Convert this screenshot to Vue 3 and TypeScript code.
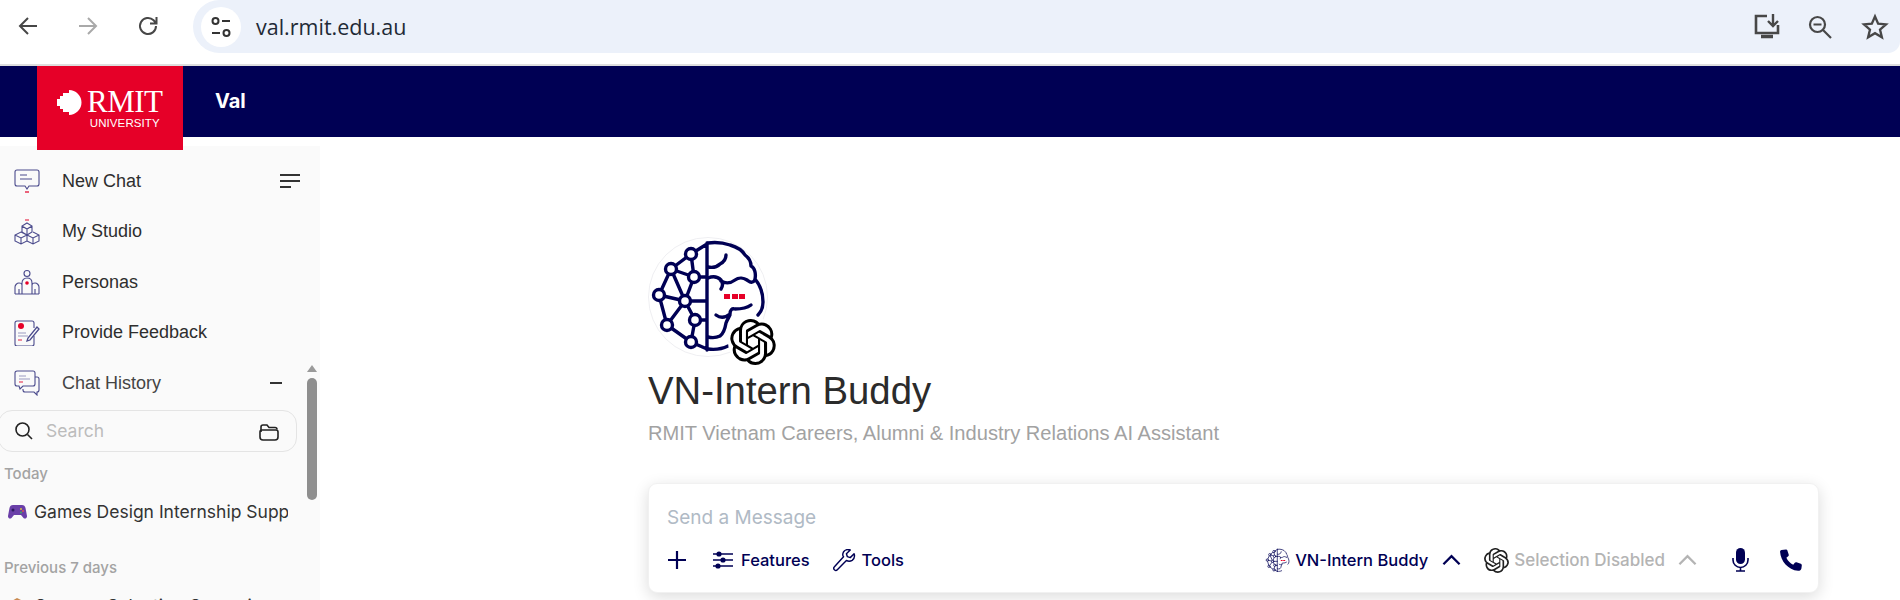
<script setup lang="ts">
interface NavItem { label: string; icon: string }
const navItems: NavItem[] = [
  { label: 'New Chat', icon: 'chat' },
  { label: 'My Studio', icon: 'studio' },
  { label: 'Personas', icon: 'personas' },
  { label: 'Provide Feedback', icon: 'feedback' },
  { label: 'Chat History', icon: 'history' },
]
</script>

<template>
  <div class="page">
    <svg class="defs" aria-hidden="true">
      <symbol id="openai" viewBox="0 0 24 24">
        <path fill="currentColor" d="M22.2819 9.8211a5.9847 5.9847 0 0 0-.5157-4.9108 6.0462 6.0462 0 0 0-6.5098-2.9A6.0651 6.0651 0 0 0 4.9807 4.1818a5.9847 5.9847 0 0 0-3.9977 2.9 6.0462 6.0462 0 0 0 .7427 7.0966 5.98 5.98 0 0 0 .511 4.9107 6.051 6.051 0 0 0 6.5146 2.9001A5.9847 5.9847 0 0 0 13.2599 24a6.0557 6.0557 0 0 0 5.7718-4.2058 5.9894 5.9894 0 0 0 3.9977-2.9001 6.0557 6.0557 0 0 0-.7475-7.0729zm-9.022 12.6081a4.4755 4.4755 0 0 1-2.8764-1.0408l.1419-.0804 4.7783-2.7582a.7948.7948 0 0 0 .3927-.6813v-6.7369l2.02 1.1686a.071.071 0 0 1 .038.052v5.5826a4.504 4.504 0 0 1-4.4945 4.4944zm-9.6607-4.1254a4.4708 4.4708 0 0 1-.5346-3.0137l.142.0852 4.783 2.7582a.7712.7712 0 0 0 .7806 0l5.8428-3.3685v2.3324a.0804.0804 0 0 1-.0332.0615L9.74 19.9502a4.4992 4.4992 0 0 1-6.1408-1.6464zM2.3408 7.8956a4.485 4.485 0 0 1 2.3655-1.9728V11.6a.7664.7664 0 0 0 .3879.6765l5.8144 3.3543-2.0201 1.1685a.0757.0757 0 0 1-.071 0l-4.8303-2.7865A4.504 4.504 0 0 1 2.3408 7.872zm16.5963 3.8558L13.1038 8.364 15.1192 7.2a.0757.0757 0 0 1 .071 0l4.8303 2.7913a4.4944 4.4944 0 0 1-.6765 8.1042v-5.6772a.79.79 0 0 0-.407-.667zm2.0107-3.0231l-.142-.0852-4.7735-2.7818a.7759.7759 0 0 0-.7854 0L9.409 9.2297V6.8974a.0662.0662 0 0 1 .0284-.0615l4.8303-2.7866a4.4992 4.4992 0 0 1 6.6802 4.66zM8.3065 12.863l-2.02-1.1638a.0804.0804 0 0 1-.038-.0567V6.0742a4.4992 4.4992 0 0 1 7.3757-3.4537l-.142.0805L8.704 5.459a.7948.7948 0 0 0-.3927.6813zm1.0976-2.3654l2.602-1.4998 2.6069 1.4998v2.9994l-2.5974 1.4997-2.6067-1.4997Z"/>
      </symbol>
      <symbol id="brain" viewBox="0 0 120 120">
        <circle cx="60" cy="60" r="59.500" fill="#fff" stroke="#efeff2" stroke-width="1"/>
        <g fill="none" stroke="#000054" stroke-width="3.400" stroke-linecap="round" stroke-linejoin="round">
          <path d="M59 6v107M43 17L23 32M23 32L11 58M23 32L37 64M23 32L46 40M43 17L46 40M46 40L37 64M11 58L37 64M37 64H59M11 58L19 88M19 88L37 64M37 64L47 83M19 88L43 105M47 83L43 105M47 83H59M43 105L59 112M46 40H59M43 17L59 7"/>
          <circle cx="43" cy="17" r="5.500" fill="#fff"/>
          <circle cx="23" cy="32" r="5.500" fill="#fff"/>
          <circle cx="46" cy="40" r="5.500" fill="#fff"/>
          <circle cx="11" cy="58" r="5.500" fill="#fff"/>
          <circle cx="37" cy="64" r="5.500" fill="#fff"/>
          <circle cx="47" cy="83" r="5.500" fill="#fff"/>
          <circle cx="19" cy="88" r="5.500" fill="#fff"/>
          <circle cx="43" cy="105" r="5.500" fill="#fff"/>
          <path d="M60 6c8-1 16 0 22 2 7 2 12 5 15 10 4 3 6 7 6 11 4 2 5 8 4 13 5 6 8 14 8 23 0 6-2 10-5 13"/>
          <path d="M60 30c5 1 9 0 12-3 4-2 6-5 6-9M60 41c5-2 10-1 13 2 2 3 2 6 0 9M73 44c5 3 10 2 14-1 4-3 9-2 12 0 3 2 5 4 8 0"/>
          <path d="M68 78c4 3 9 3 14-1 0-4 2-6 5-5 6 0 12-1 16-4M82 78c-1 2-3 5-4 8-1 6-3 11-6 13-4 2-8 2-12 1M60 112c8 1 14 0 20-3"/>
        </g>
        <path fill="#e60028" d="M76 57h6v5h-6zM84 57h6v5h-6zM91 57h6v5h-6z"/>
      </symbol>
    </svg>

    <div class="toolbar">
      <div class="tool-btns">
        <svg class="tb-ic" viewBox="0 0 24 24"><path d="M21 12H4M12 4l-8 8 8 8" fill="none" stroke="#474747" stroke-width="2"/></svg>
        <svg class="tb-ic" viewBox="0 0 24 24"><path d="M3 12h17M12 4l8 8-8 8" fill="none" stroke="#a9a9a9" stroke-width="2"/></svg>
        <svg class="tb-ic" viewBox="0 0 24 24"><path d="M20 12a8 8 0 1 1-2.400-5.700L20 9M20.500 3v6.500H14" fill="none" stroke="#474747" stroke-width="2"/></svg>
      </div>
      <div class="omnibox">
        <div class="tune">
          <svg width="24" height="24" viewBox="0 0 24 24" fill="none" stroke="#333" stroke-width="2"><circle cx="6.500" cy="6" r="3"/><path d="M13 6h8M3 18h8"/><circle cx="17.500" cy="18" r="3"/></svg>
        </div>
        <span class="url">val.rmit.edu.au</span>
        <div class="omni-right">
          <svg width="30" height="30" viewBox="0 0 30 30" fill="none" stroke="#474747" stroke-width="2.600"><path d="M15 4H4v17h22v-8"/><path d="M21 2v12M16 9l5 5 5-5" stroke-width="2.400"/><path d="M9 24.500h12" stroke-width="3.500"/></svg>
          <svg class="zoom-ic" width="26" height="26" viewBox="0 0 26 26" fill="none" stroke="#474747" stroke-width="2.200"><circle cx="10.500" cy="10.500" r="7.500"/><path d="M6.500 10.500h8M16 16l8 8"/></svg>
          <svg class="star-ic" width="28" height="28" viewBox="0 0 24 24" fill="none" stroke="#474747" stroke-width="2"><path d="M12 3l2.700 6.200 6.700.6-5.100 4.400 1.600 6.600L12 17.300l-5.900 3.500 1.600-6.600-5.100-4.400 6.700-.6z"/></svg>
        </div>
      </div>
    </div>

    <header class="app-header">
      <div class="logo">
        <svg class="logo-mark" viewBox="0 0 25 25"><path fill="#fff" d="M12 0a12.500 12.500 0 0 1 0 25v-3H6v-3H3v-3H0V9h3V6h3V3h6z"/></svg>
        <div class="logo-text">
          <span class="logo-rmit">RMIT</span>
          <span class="logo-uni">UNIVERSITY</span>
        </div>
      </div>
      <span class="app-name">Val</span>
    </header>

    <div class="body">
      <aside class="sidebar">
        <nav class="nav">
          <div v-for="item in navItems" :key="item.label" class="nav-row">
            <svg class="nav-ic" viewBox="0 0 26 26" fill="none" stroke="#4a4a8c" stroke-width="1.100">
              <template v-if="item.icon === 'chat'">
                <path d="M3 2h20a2 2 0 0 1 2 2v12a2 2 0 0 1-2 2h-8l-2 3-2-3H3a2 2 0 0 1-2-2V4a2 2 0 0 1 2-2z"/>
                <path d="M6 7h7M6 11h12"/>
                <path d="M11 24h4" stroke="#e6304f" stroke-width="1.500"/>
              </template>
              <template v-else-if="item.icon === 'studio'">
                <path d="M13 5l5 3v6l-5 3-5-3V8zM8 8l5 3 5-3M13 11v6M7 14l6 3v6l-6 3-6-3v-6zM1 17l6 3 6-3M7 20v6M19 14l6 3v6l-6 3-6-3M13 17l6 3 6-3M19 20v6" transform="translate(0 -1)"/>
                <path d="M11 1h4" stroke="#e6304f" stroke-width="1.200"/>
              </template>
              <template v-else-if="item.icon === 'personas'">
                <circle cx="13" cy="4.500" r="3"/>
                <path d="M8 25V14c0-3 2-5 5-5s5 2 5 5v11M1 25h24M1 25v-7c0-2 2-4 4-4s3 1 3 2M25 25v-7c0-2-2-4-4-4s-3 1-3 2M5 20v5M21 20v5"/>
                <circle cx="13" cy="14" r="1.800" fill="#e60028" stroke="none"/>
              </template>
              <template v-else-if="item.icon === 'feedback'">
                <path d="M20 8V3a2 2 0 0 0-2-2H3a2 2 0 0 0-2 2v21a2 2 0 0 0 2 2h15a2 2 0 0 0 2-2v-8"/>
                <circle cx="7" cy="6" r="3" fill="#e60028" stroke="none"/>
                <path d="M4 13h8M4 16h10" stroke="#9a9ac0"/>
                <path d="M4 20h4" stroke="#e6304f"/>
                <path d="M14 18l-1 3 3-1 9-11-2-2z" stroke-width="1.300"/>
              </template>
              <template v-else>
                <path d="M3 1h16a2 2 0 0 1 2 2v11a2 2 0 0 1-2 2H9l-3 3-1-3H3a2 2 0 0 1-2-2V3a2 2 0 0 1 2-2z"/>
                <path d="M21 7h2a2 2 0 0 1 2 2v11a2 2 0 0 1-2 2v3l-3-3H11a2 2 0 0 1-2-2v-1"/>
                <path d="M5 6h7M5 9h11" stroke="#9a9ac0"/>
                <path d="M5 12h4" stroke="#e6304f"/>
              </template>
            </svg>
            <span class="nav-label" :class="{ soft: item.icon === 'history' }">{{ item.label }}</span>
            <svg v-if="item.icon === 'chat'" class="menu-ic" viewBox="0 0 20 14" fill="none" stroke="#333" stroke-width="2"><path d="M0 1h20M0 7h20M0 13h11"/></svg>
            <span v-if="item.icon === 'history'" class="minus"></span>
          </div>
        </nav>
        <div class="history">
          <div class="search">
            <svg width="18" height="18" viewBox="0 0 18 18" fill="none" stroke="#222" stroke-width="1.600"><circle cx="7.500" cy="7.500" r="6.500"/><path d="M12.500 12.500l4.500 4.500"/></svg>
            <span class="search-text">Search</span>
            <svg class="folder" width="20" height="17" viewBox="0 0 20 17" fill="none" stroke="#222" stroke-width="1.600"><path d="M2 8V3a2 2 0 0 1 2-2h4l2 2.500h6a2 2 0 0 1 2 2"/><path d="M3 6h14a2 2 0 0 1 2 2v5a3 3 0 0 1-3 3H4a3 3 0 0 1-3-3V8a2 2 0 0 1 2-2z"/></svg>
          </div>
          <div class="group-label today">Today</div>
          <div class="chat-row">
            <svg class="emoji" width="19" height="16" viewBox="0 0 19 16"><path fill="#6a3fa8" d="M5 1h9c2 0 3 1 3.500 3l1.500 8c.2 2-1.800 3.500-3.500 2L13 11H6l-2.500 3C1.800 15.500-.2 14 0 12l1.500-8C2 2 3 1 5 1z"/><circle cx="5" cy="6" r="1.500" fill="#2d1a60"/><circle cx="13" cy="5" r="1" fill="#d8c040"/><circle cx="15" cy="7" r="1" fill="#e05050"/><circle cx="13" cy="8.500" r="1" fill="#40b060"/></svg>
            <span class="chat-title">Games Design Internship Support</span>
          </div>
          <div class="group-label prev">Previous 7 days</div>
          <div class="chat-row">
            <svg class="emoji" width="19" height="16" viewBox="0 0 19 16"><path fill="#c98a50" d="M2 4l7-4 8 4v12H2z"/></svg>
            <span class="chat-title">Campus Selection Campaign</span>
          </div>
        </div>
        <div class="scrollbar">
          <span class="sb-arrow"></span>
          <span class="sb-thumb"></span>
        </div>
      </aside>

      <main class="main">
        <div class="hero-icons">
          <svg class="brain"><use href="#brain"/></svg>
          <span class="oa-badge"><svg class="oa-big"><use href="#openai"/></svg></span>
        </div>
        <h1 class="title">VN-Intern Buddy</h1>
        <p class="subtitle">RMIT Vietnam Careers, Alumni &amp; Industry Relations AI Assistant</p>

        <div class="composer">
          <div class="placeholder">Send a Message</div>
          <div class="actions">
            <svg class="plus" viewBox="0 0 20 20" fill="none" stroke="#000054" stroke-width="2.200"><path d="M10 1v18M1 10h18"/></svg>
            <div class="action feat">
              <svg width="20" height="18" viewBox="0 0 20 18" fill="none" stroke="#000054" stroke-width="1.600"><path d="M0 3h4M8 3h12M0 9h8M12 9h8M0 15h3M7 15h13"/><circle cx="6" cy="3" r="1.800" fill="#000054"/><circle cx="10" cy="9" r="1.800" fill="#000054"/><circle cx="5" cy="15" r="1.800" fill="#000054"/></svg>
              <span>Features</span>
            </div>
            <div class="action tools">
              <svg width="23" height="23" viewBox="0 0 24 24" fill="none" stroke="#000054" stroke-width="1.500" stroke-linejoin="round"><path d="M22 5l-4 4-3-1-1-3 4-4c-3-1-6 0-7 2-1 2-1 4 0 5L1.500 18.500c-1 1-1 2-.2 3s2.200 1.200 3.200.2L14 12c2 1 4 1 6-.2 2-1.500 3-4 2-6.800z"/></svg>
              <span>Tools</span>
            </div>
            <div class="right">
              <div class="action model">
                <svg class="brain-small"><use href="#brain"/></svg>
                <span>VN-Intern Buddy</span>
              </div>
              <svg class="chev" viewBox="0 0 20 12" fill="none" stroke="#000054" stroke-width="2.400"><path d="M1.500 10.500L10 2l8.500 8.500"/></svg>
              <div class="action disabled">
                <svg class="oa-small"><use href="#openai"/></svg>
                <span>Selection Disabled</span>
              </div>
              <svg class="chev grey" viewBox="0 0 20 12" fill="none" stroke="#b4b4b4" stroke-width="2.400"><path d="M1.500 10.500L10 2l8.500 8.500"/></svg>
              <svg class="mic" width="17" height="24" viewBox="0 0 17 24"><rect x="4" y="0" width="9" height="16" rx="4.500" fill="#000054"/><path d="M1 10v2a7.500 7.500 0 0 0 15 0v-2M8.500 19.500V23M4 23h9" fill="none" stroke="#000054" stroke-width="1.600"/></svg>
              <svg class="phone" width="22" height="22" viewBox="0 0 22 22"><path fill="#000054" d="M6 .5L1.500 1C.5 1.200 0 2 .1 3c.5 9 8 18 18 18.800 1.500.1 3-.6 3.300-2.300l.4-3c.1-.8-.3-1.400-1-1.700l-4.300-1.500c-.7-.2-1.300 0-1.700.5l-1.600 1.900c-3-1.400-5.500-4-6.800-7l1.800-1.500c.6-.5.8-1.100.5-1.800L7.300 1.300C7 .7 6.600.4 6 .5z"/></svg>
            </div>
          </div>
        </div>
      </main>
    </div>
  </div>
</template>

<style scoped>
.page {
  width: 1900px;
  height: 600px;
  overflow: hidden;
  background: #fff;
  display: flex;
  flex-direction: column;
  font-family: "Liberation Sans", Arial, sans-serif;
}
.defs { position: absolute; width: 0; height: 0; }

.toolbar {
  height: 64px;
  flex: none;
  display: flex;
  align-items: flex-start;
  border-bottom: 2px solid #dedede;
  box-sizing: content-box;
}
.tool-btns {
  display: flex;
  gap: 36px;
  padding: 14px 0 0 16px;
  width: 193px;
  flex: none;
  box-sizing: border-box;
}
.tb-ic { width: 24px; height: 24px; flex: none; }
.omnibox {
  flex: 1;
  height: 53px;
  background: #ecf1fa;
  border-radius: 27px 0 12px 27px;
  display: flex;
  align-items: center;
  padding: 0 0 0 8px;
}
.tune {
  width: 40px;
  height: 40px;
  border-radius: 50%;
  background: #fff;
  display: flex;
  align-items: center;
  justify-content: center;
}
.url {
  margin-left: 15px;
  font-family: "Open Sans", sans-serif;
  font-size: 21.500px;
  color: #1f2a36;
}
.omni-right {
  margin-left: auto;
  display: flex;
  align-items: center;
  padding-right: 11px;
}
.zoom-ic { margin-left: 25px; }
.star-ic { margin-left: 28px; }

.app-header {
  height: 71px;
  flex: none;
  background: #000054;
  display: flex;
  align-items: center;
  position: relative;
}
.logo {
  position: absolute;
  left: 37px;
  top: 0;
  width: 146px;
  height: 84px;
  background: #e60028;
  z-index: 2;
  display: flex;
  align-items: flex-start;
  padding: 24px 0 0 20px;
  box-sizing: border-box;
  gap: 5px;
}
.logo-mark { width: 25px; height: 25px; flex: none; }
.logo-text { display: flex; flex-direction: column; align-items: center; color: #fff; margin-top: -3px; }
.logo-rmit {
  font-family: "Liberation Serif", serif;
  font-size: 31px;
  line-height: 29px;
  letter-spacing: -0.5px;
}
.logo-uni {
  font-size: 11.500px;
  line-height: 12px;
  margin-top: 1px;
  letter-spacing: 0.1px;
}
.app-name {
  margin-left: 215px;
  font-weight: 700;
  font-size: 20px;
  color: #fff;
  font-family: Inter, sans-serif;
  margin-top: -2px;
}

.body { flex: 1; display: flex; min-height: 0; }

.sidebar {
  width: 320px;
  flex: none;
  background: #fafafa;
  margin-top: 9px;
  position: relative;
  display: flex;
  flex-direction: column;
}
.nav { padding-top: 10px; }
.nav-row {
  height: 50.500px;
  display: flex;
  align-items: center;
  padding: 0 20px 0 14px;
}
.nav-ic { width: 26px; height: 26px; flex: none; margin-right: 22px; }
.nav-label {
  font-size: 18px;
  color: #2e2e2e;
  flex: 1;
}
.nav-label.soft { color: #444; }
.menu-ic { width: 20px; height: 14px; flex: none; }
.minus { width: 12px; height: 2px; background: #333; margin-right: 18px; flex: none; }

.history { padding-top: 1px; font-family: Inter, sans-serif; }
.search {
  margin-left: -2px;
  width: 299px;
  height: 42px;
  box-sizing: border-box;
  border: 1px solid #e4e4e4;
  border-radius: 14px;
  display: flex;
  align-items: center;
  padding: 0 17px 0 16px;
}
.search-text { margin-left: 13px; font-size: 17.500px; color: #bcbcbc; }
.folder { margin-left: auto; margin-top: 4px; }
.group-label { font-size: 15px; color: #a3a3a3; padding-left: 4px; line-height: 20px; font-weight: 500; }
.today { margin-top: 12px; }
.prev { margin-top: 28px; }
.chat-row {
  display: flex;
  align-items: center;
  padding-left: 8px;
  width: 288px;
  box-sizing: border-box;
  height: 36px;
  margin-top: 10px;
}
.emoji { flex: none; margin-right: 7px; }
.chat-title {
  font-size: 17.500px;
  color: #333;
  white-space: nowrap;
  overflow: hidden;
}
.scrollbar {
  position: absolute;
  right: 3px;
  top: 219px;
  width: 10px;
  display: flex;
  flex-direction: column;
  align-items: center;
}
.sb-arrow {
  width: 0;
  height: 0;
  border-left: 5px solid transparent;
  border-right: 5px solid transparent;
  border-bottom: 7px solid #9a9a9a;
}
.sb-thumb {
  margin-top: 6px;
  width: 10px;
  height: 122px;
  border-radius: 5px;
  background: #8e8e8e;
}

.main {
  flex: 1;
  padding: 100px 81px 0 328px;
  min-width: 0;
}
.hero-icons { position: relative; height: 130px; }
.brain { width: 120px; height: 120px; display: block; }
.oa-badge {
  position: absolute;
  left: 80px;
  top: 80px;
  width: 50px;
  height: 50px;
  border-radius: 50%;
  background: #fff;
  display: flex;
  align-items: center;
  justify-content: center;
}
.oa-big { width: 46px; height: 46px; color: #000; }
.title {
  margin: 0;
  font-size: 38.300px;
  line-height: 46px;
  font-weight: 400;
  color: #2b2b2b;
  padding-top: 1px;
}
.subtitle {
  margin: 7px 0 0;
  font-size: 20.100px;
  line-height: 24px;
  color: #a2a2a2;
}
.composer {
  margin-top: 38px;
  height: 110px;
  box-sizing: border-box;
  background: #fff;
  border: 1px solid #f1f1f1;
  border-radius: 9px;
  box-shadow: 0 4px 16px rgba(0, 0, 0, 0.14);
  padding: 22px 12px 0 18px;
  font-family: Inter, sans-serif;
}
.placeholder { font-size: 19px; line-height: 24px; color: #b0bac5; }
.actions {
  display: flex;
  align-items: center;
  margin-top: 14px;
  height: 32px;
  color: #000054;
  font-size: 16.500px;
  font-weight: 500;
}
.plus { width: 20px; height: 20px; flex: none; }
.action { display: flex; align-items: center; white-space: nowrap; }
.feat { margin-left: 26px; gap: 8px; }
.tools { margin-left: 23px; gap: 6px; }
.right { margin-left: auto; display: flex; align-items: center; }
.brain-small { width: 25px; height: 25px; margin-right: 5px; }
.chev { width: 19px; height: 12px; margin-left: 14px; flex: none; }
.chev.grey { margin-left: 13px; }
.disabled { color: #b4b4b4; margin-left: 23px; font-size: 17px; }
.oa-small { width: 25px; height: 25px; margin-right: 5px; color: #222; }
.mic { margin-left: 35px; flex: none; }
.phone { margin-left: 31px; margin-right: 4px; flex: none; }
</style>
